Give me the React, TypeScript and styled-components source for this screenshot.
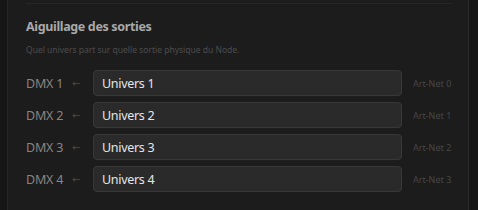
import React from "react";
import styled, { createGlobalStyle } from "styled-components";

const GlobalStyle = createGlobalStyle`
  html, body {
    margin: 0;
    padding: 0;
    background: #161616;
  }
  body {
    font-family: "Noto Sans", "Open Sans", sans-serif;
  }
`;

const Page = styled.div`
  display: flex;
  height: 210px;
  padding-left: 7px;
`;

const Panel = styled.div`
  width: 462px;
  background: #1c1c1c;
  border-left: 1px solid #262626;
  border-right: 1px solid #2c2c2c;
  padding: 0 17px 0 18px;
  box-sizing: border-box;
`;

const Section = styled.section`
  border-top: 1px solid #272727;
  margin-top: 3px;
  padding-top: 14px;
`;

const Title = styled.h3`
  margin: 0;
  font-size: 12.5px;
  line-height: 17px;
  font-weight: 700;
  letter-spacing: -0.35px;
  color: #a9a9a9;
`;

const Hint = styled.p`
  margin: 8px 0 14px;
  font-size: 8.5px;
  line-height: 13px;
  color: #4c4c4c;
`;

const Rows = styled.div`
  display: flex;
  flex-direction: column;
  gap: 6px;
`;

const Row = styled.div`
  display: flex;
  align-items: center;
  height: 26px;
`;

const Output = styled.span`
  width: 46px;
  font-size: 12.5px;
  letter-spacing: -0.2px;
  color: #858585;
`;

const Arrow = styled.span`
  width: 21px;
  font-family: "DejaVu Sans", sans-serif;
  font-size: 10px;
  color: #4a4a4a;
`;

const UniverseField = styled.div`
  flex: 1;
  height: 26px;
  box-sizing: border-box;
  display: flex;
  align-items: center;
  padding: 0 8px;
  background: #2a2a2a;
  border: 1px solid #383838;
  border-radius: 4px;
  font-size: 12.5px;
  letter-spacing: -0.3px;
  color: #e6e6e6;
`;

const Port = styled.span`
  width: 38px;
  margin-left: 11px;
  font-size: 9px;
  color: #474747;
  white-space: nowrap;
`;

const outputs = [0, 1, 2, 3];

export default function App() {
  return (
    <>
      <GlobalStyle />
      <Page>
        <Panel>
          <Section>
            <Title>Aiguillage des sorties</Title>
            <Hint>Quel univers part sur quelle sortie physique du Node.</Hint>
            <Rows>
              {outputs.map((i) => (
                <Row key={i}>
                  <Output>DMX {i + 1}</Output>
                  <Arrow>←</Arrow>
                  <UniverseField>Univers {i + 1}</UniverseField>
                  <Port>Art-Net {i}</Port>
                </Row>
              ))}
            </Rows>
          </Section>
        </Panel>
      </Page>
    </>
  );
}
